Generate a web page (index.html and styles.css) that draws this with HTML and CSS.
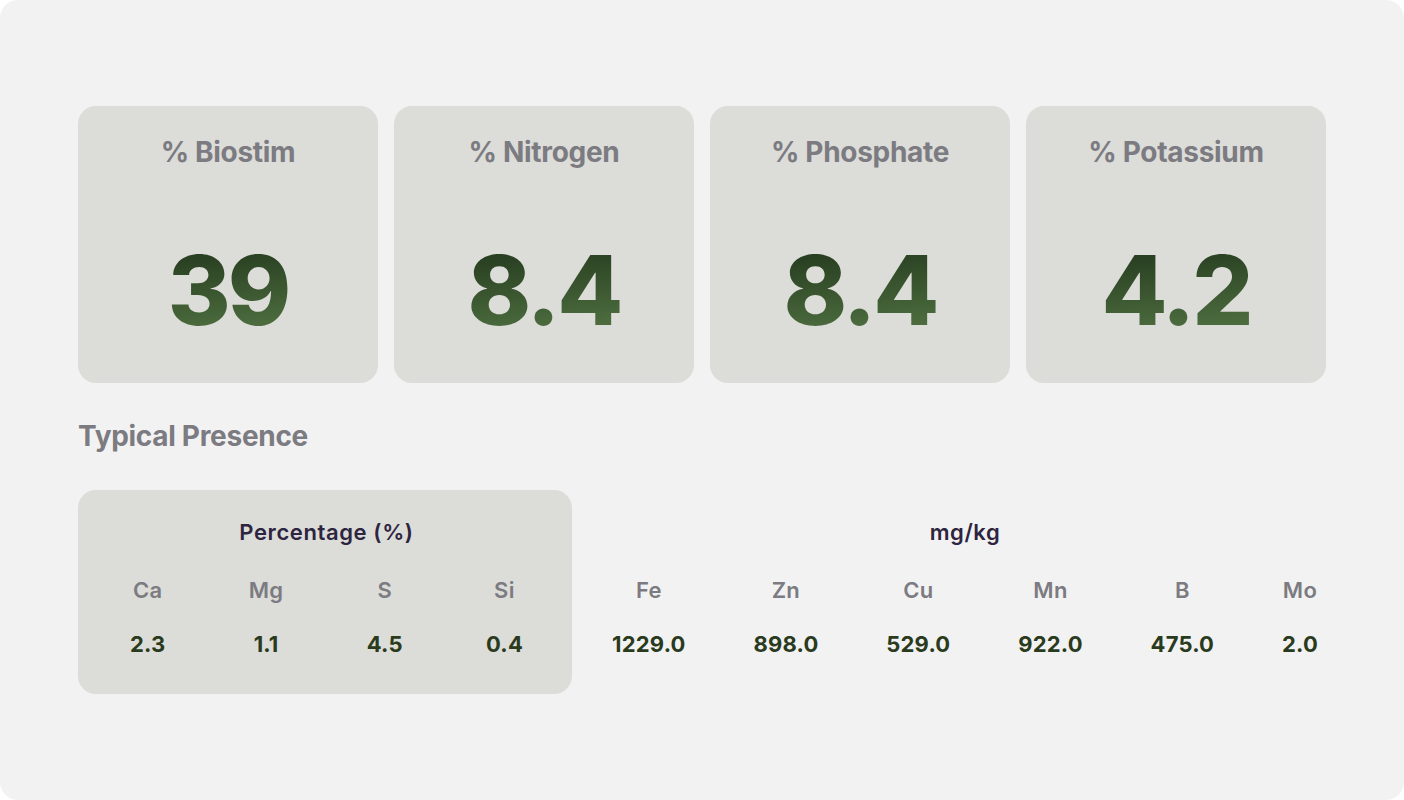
FILE: index.html
```html
<!DOCTYPE html>
<html lang="en">
<head>
<meta charset="utf-8">
<title>Nutrient Analysis</title>
<link rel="stylesheet" href="styles.css">
</head>
<body>
<main class="panel">
  <section class="stats">
    <div class="stat-card">
      <h2 class="stat-title">% Biostim</h2>
      <div class="stat-value">39</div>
    </div>
    <div class="stat-card">
      <h2 class="stat-title">% Nitrogen</h2>
      <div class="stat-value">8.4</div>
    </div>
    <div class="stat-card">
      <h2 class="stat-title">% Phosphate</h2>
      <div class="stat-value">8.4</div>
    </div>
    <div class="stat-card">
      <h2 class="stat-title">% Potassium</h2>
      <div class="stat-value">4.2</div>
    </div>
  </section>

  <h2 class="section-title">Typical Presence</h2>

  <section class="presence">
    <div class="group group-pct">
      <div class="group-title">Percentage (%)</div>
      <div class="cols">
        <div class="col"><span class="el">Ca</span><span class="val">2.3</span></div>
        <div class="col"><span class="el">Mg</span><span class="val">1.1</span></div>
        <div class="col"><span class="el">S</span><span class="val">4.5</span></div>
        <div class="col"><span class="el">Si</span><span class="val">0.4</span></div>
      </div>
    </div>
    <div class="group group-mg">
      <div class="group-title">mg/kg</div>
      <div class="cols">
        <div class="col"><span class="el">Fe</span><span class="val">1229.0</span></div>
        <div class="col"><span class="el">Zn</span><span class="val">898.0</span></div>
        <div class="col"><span class="el">Cu</span><span class="val">529.0</span></div>
        <div class="col"><span class="el">Mn</span><span class="val">922.0</span></div>
        <div class="col"><span class="el">B</span><span class="val">475.0</span></div>
        <div class="col"><span class="el">Mo</span><span class="val">2.0</span></div>
      </div>
    </div>
  </section>
</main>
</body>
</html>
```

FILE: styles.css
```css
* { box-sizing: border-box; }

html, body {
  margin: 0;
  padding: 0;
  background: #ffffff;
}

body {
  font-family: Inter, "Noto Sans", "Liberation Sans", sans-serif;
  width: 1404px;
  height: 800px;
  overflow: hidden;
}

.panel {
  width: 1404px;
  height: 800px;
  background: #f2f2f2;
  border-radius: 18px;
  padding: 106px 78px 0 78px;
}

.stats {
  display: grid;
  grid-template-columns: repeat(4, 300px);
  gap: 16px;
}

.stat-card {
  background: #dcdcd8;
  border-radius: 18px;
  height: 277px;
  padding-top: 29px;
  text-align: center;
}

.stat-title {
  margin: 0;
  font-size: 28px;
  line-height: 34px;
  font-weight: 700;
  letter-spacing: -0.3px;
  color: #7b7b81;
}

.stat-value {
  margin-top: 73px;
  font-size: 96px;
  line-height: 96px;
  font-weight: 800;
  letter-spacing: -3px;
  background: linear-gradient(175deg, #283f21 15%, #4c6c3e 85%);
  -webkit-background-clip: text;
  background-clip: text;
  color: transparent;
  display: inline-block;
}

.section-title {
  margin: 36px 0 0 0;
  font-size: 28px;
  line-height: 34px;
  font-weight: 700;
  letter-spacing: -0.3px;
  color: #7b7b81;
}

.presence {
  margin-top: 37px;
  display: flex;
  gap: 32px;
}

.group {
  padding-top: 28px;
  padding-bottom: 36px;
}

.group-pct {
  width: 494px;
  background: #dcdcd8;
  border-radius: 18px;
  padding-left: 52px;
  padding-right: 49px;
}

.group-mg {
  flex: 1;
  padding-left: 8px;
  padding-right: 8px;
}

.group-title {
  text-align: center;
  font-size: 22px;
  line-height: 28px;
  font-weight: 600;
  letter-spacing: 0.6px;
  color: #2d2540;
}

.cols {
  margin-top: 30px;
  display: flex;
  justify-content: space-between;
}

.col {
  display: flex;
  flex-direction: column;
  align-items: center;
  gap: 26px;
}

.el {
  font-size: 22px;
  line-height: 28px;
  font-weight: 600;
  letter-spacing: 0.3px;
  color: #7b7b81;
}

.val {
  font-size: 22px;
  line-height: 28px;
  font-weight: 700;
  letter-spacing: 0.2px;
  color: #2a3a1d;
}
```
